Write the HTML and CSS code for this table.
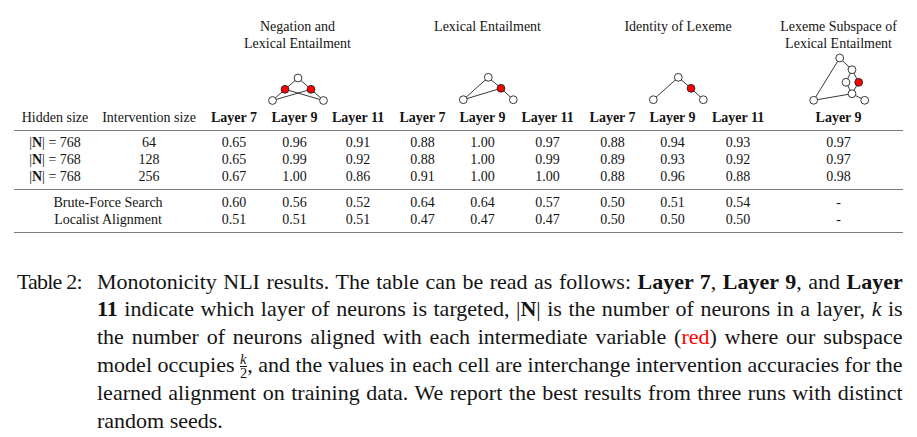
FILE: index.html
```html
<!DOCTYPE html>
<html>
<head>
<meta charset="utf-8">
<link rel="stylesheet" href="styles.css">
</head>
<body>
<table class="results">
  <colgroup>
    <col style="width:82px"><col style="width:106px">
    <col style="width:64px"><col style="width:57px"><col style="width:70px">
    <col style="width:59px"><col style="width:61px"><col style="width:69px">
    <col style="width:61px"><col style="width:59px"><col style="width:72px">
    <col style="width:129px">
  </colgroup>
  <thead>
    <tr class="groups">
      <th></th><th></th>
      <th colspan="3"><div class="grp"><div class="gtitle">Negation and<br>Lexical Entailment</div>
        <svg class="graph" width="64" height="54" viewBox="0 0 64 54">
          <g stroke="#222" stroke-width="0.9" fill="none">
            <line x1="32" y1="26" x2="19" y2="37.3"/><line x1="32" y1="26" x2="45" y2="37.3"/>
            <line x1="19" y1="37.3" x2="6.5" y2="48.5"/><line x1="45" y1="37.3" x2="57.5" y2="48.5"/>
            <line x1="6.5" y1="48.5" x2="45" y2="37.3"/><line x1="57.5" y1="48.5" x2="19" y2="37.3"/>
          </g>
          <g stroke="#222" stroke-width="0.9">
            <circle cx="32" cy="26" r="3.9" fill="#fff"/>
            <circle cx="19" cy="37.3" r="3.9" fill="#f00"/>
            <circle cx="45" cy="37.3" r="3.9" fill="#f00"/>
            <circle cx="6.5" cy="48.5" r="3.9" fill="#fff"/>
            <circle cx="57.5" cy="48.5" r="3.9" fill="#fff"/>
          </g>
        </svg></div></th>
      <th colspan="3"><div class="grp"><div class="gtitle">Lexical Entailment</div>
        <svg class="graph" width="64" height="54" viewBox="0 0 64 54">
          <g stroke="#222" stroke-width="0.9" fill="none">
            <line x1="32.3" y1="26.3" x2="45" y2="37.3"/><line x1="45" y1="37.3" x2="57.3" y2="48.7"/>
            <line x1="7.3" y1="48.7" x2="32.3" y2="26.3"/><line x1="7.3" y1="48.7" x2="45" y2="37.3"/>
          </g>
          <g stroke="#222" stroke-width="0.9">
            <circle cx="32.3" cy="26.3" r="3.9" fill="#fff"/>
            <circle cx="45" cy="37.3" r="3.9" fill="#f00"/>
            <circle cx="7.3" cy="48.7" r="3.9" fill="#fff"/>
            <circle cx="57.3" cy="48.7" r="3.9" fill="#fff"/>
          </g>
        </svg></div></th>
      <th colspan="3"><div class="grp"><div class="gtitle">Identity of Lexeme</div>
        <svg class="graph" width="64" height="54" viewBox="0 0 64 54">
          <g stroke="#222" stroke-width="0.9" fill="none">
            <line x1="7.3" y1="48.7" x2="32.3" y2="26.3"/><line x1="32.3" y1="26.3" x2="45" y2="37.3"/>
            <line x1="45" y1="37.3" x2="57.3" y2="48.7"/>
          </g>
          <g stroke="#222" stroke-width="0.9">
            <circle cx="32.3" cy="26.3" r="3.9" fill="#fff"/>
            <circle cx="45" cy="37.3" r="3.9" fill="#f00"/>
            <circle cx="7.3" cy="48.7" r="3.9" fill="#fff"/>
            <circle cx="57.3" cy="48.7" r="3.9" fill="#fff"/>
          </g>
        </svg></div></th>
      <th><div class="grp"><div class="gtitle">Lexeme Subspace of<br>Lexical Entailment</div>
        <svg class="graph" width="64" height="54" viewBox="0 0 64 54">
          <g stroke="#222" stroke-width="0.9" fill="none">
            <line x1="32.7" y1="6" x2="6.7" y2="48.3"/><line x1="32.7" y1="6" x2="45" y2="17.7"/>
            <line x1="45" y1="17.7" x2="39" y2="30.3"/><line x1="45" y1="17.7" x2="51.7" y2="30.3"/>
            <line x1="39" y1="30.3" x2="45" y2="41.7"/><line x1="51.7" y1="30.3" x2="45" y2="41.7"/>
            <line x1="6.7" y1="48.3" x2="45" y2="41.7"/><line x1="45" y1="41.7" x2="57.7" y2="48.3"/>
          </g>
          <g stroke="#222" stroke-width="0.9">
            <circle cx="32.7" cy="6" r="3.9" fill="#fff"/>
            <circle cx="45" cy="17.7" r="3.9" fill="#fff"/>
            <circle cx="39" cy="30.3" r="3.9" fill="#fff"/>
            <circle cx="51.7" cy="30.3" r="3.9" fill="#f00"/>
            <circle cx="45" cy="41.7" r="3.9" fill="#fff"/>
            <circle cx="6.7" cy="48.3" r="3.9" fill="#fff"/>
            <circle cx="57.7" cy="48.3" r="3.9" fill="#fff"/>
          </g>
        </svg></div></th>
    </tr>
    <tr class="heads">
      <th class="plain">Hidden size</th><th class="plain">Intervention size</th>
      <th>Layer 7</th><th>Layer 9</th><th>Layer 11</th>
      <th>Layer 7</th><th>Layer 9</th><th>Layer 11</th>
      <th>Layer 7</th><th>Layer 9</th><th>Layer 11</th>
      <th>Layer 9</th>
    </tr>
  </thead>
  <tbody class="main">
    <tr><td>|<b>N</b>| = 768</td><td>64</td><td>0.65</td><td>0.96</td><td>0.91</td><td>0.88</td><td>1.00</td><td>0.97</td><td>0.88</td><td>0.94</td><td>0.93</td><td>0.97</td></tr>
    <tr><td>|<b>N</b>| = 768</td><td>128</td><td>0.65</td><td>0.99</td><td>0.92</td><td>0.88</td><td>1.00</td><td>0.99</td><td>0.89</td><td>0.93</td><td>0.92</td><td>0.97</td></tr>
    <tr><td>|<b>N</b>| = 768</td><td>256</td><td>0.67</td><td>1.00</td><td>0.86</td><td>0.91</td><td>1.00</td><td>1.00</td><td>0.88</td><td>0.96</td><td>0.88</td><td>0.98</td></tr>
  </tbody>
  <tbody class="base">
    <tr><td colspan="2">Brute-Force Search</td><td>0.60</td><td>0.56</td><td>0.52</td><td>0.64</td><td>0.64</td><td>0.57</td><td>0.50</td><td>0.51</td><td>0.54</td><td>-</td></tr>
    <tr><td colspan="2">Localist Alignment</td><td>0.51</td><td>0.51</td><td>0.51</td><td>0.47</td><td>0.47</td><td>0.47</td><td>0.50</td><td>0.50</td><td>0.50</td><td>-</td></tr>
  </tbody>
</table>

<div class="caption">
  <div class="label">Table 2:</div>
  <p class="text"><span class="ln">Monotonicity NLI results. The table can be read as follows: <b>Layer 7</b>, <b>Layer 9</b>, and <b>Layer</b></span>
<span class="ln"><b>11</b> indicate which layer of neurons is targeted, |<b>N</b>| is the number of neurons in a layer, <i>k</i> is</span>
<span class="ln">the number of neurons aligned with each intermediate variable (<span class="red">red</span>) where our subspace</span>
<span class="ln">model occupies <span class="frac"><span class="num"><i>k</i></span><span class="den">2</span></span>, and the values in each cell are interchange intervention accuracies for the</span>
<span class="ln">learned alignment on training data. We report the best results from three runs with distinct</span>
<span class="ln last">random seeds.</span></p>
</div>
</body>
</html>
```

FILE: styles.css
```css
html, body {
  margin: 0;
  padding: 0;
  background: #fff;
}
body {
  font-family: "Liberation Serif", "Times New Roman", serif;
  color: #141414;
}
.results {
  margin: 18px 0 0 14px;
  width: 889px;
  table-layout: fixed;
  border-collapse: collapse;
  font-size: 14px;
  line-height: 17px;
}
.results th,
.results td {
  padding: 0;
  text-align: center;
  white-space: nowrap;
}
.results th { font-weight: bold; }
.results th.plain { font-weight: normal; }
.groups th {
  font-weight: normal;
  vertical-align: top;
}
.grp {
  height: 87px;
  padding-bottom: 4px;
  display: flex;
  flex-direction: column;
  justify-content: space-between;
  align-items: center;
}
.graph { display: block; flex: none; }
.heads th {
  padding-bottom: 3.5px;
  border-bottom: 1.2px solid #7d7d7d;
}
.main tr:first-child td { padding-top: 3.5px; }
.main tr:last-child td { padding-bottom: 4px; border-bottom: 1.2px solid #7d7d7d; }
.base tr:first-child td { padding-top: 3.5px; }
.base tr:last-child td { padding-bottom: 4px; border-bottom: 1.2px solid #7d7d7d; }

.caption {
  display: flex;
  margin: 35px 15px 0 17px;
  font-family: "Liberation Serif", "Times New Roman", serif;
  font-size: 22px;
  line-height: 27.67px;
}
.label {
  flex: none;
  width: 80px;
  letter-spacing: -0.8px;
}
.text {
  flex: 1;
  margin: 0;
}
.ln {
  display: block;
  text-align: justify;
  text-align-last: justify;
  white-space: nowrap;
}
.ln.last { text-align-last: left; }
.red { color: #f00; }
.frac {
  display: inline-flex;
  flex-direction: column;
  vertical-align: middle;
  font-size: 14.5px;
  line-height: 11px;
  text-align: center;
}
.frac .num { border-bottom: 1px solid #141414; padding: 0 0 1px; }
.frac .den { padding-top: 1px; }
```
